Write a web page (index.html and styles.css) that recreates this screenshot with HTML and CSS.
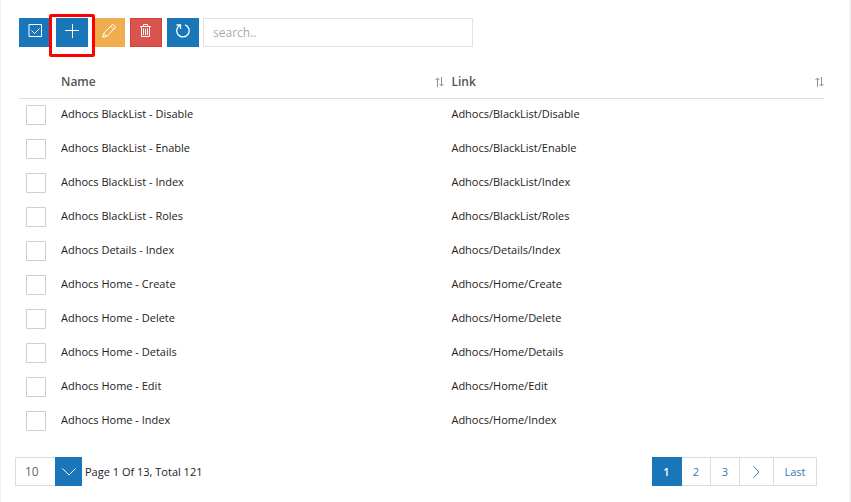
FILE: index.html
```
<!DOCTYPE html>
<html lang="en">
<head>
<meta charset="utf-8">
<title>Permissions</title>
<link rel="stylesheet" href="styles.css">
</head>
<body>
<main class="panel">
  <div class="toolbar">
    <button class="btn" type="button" aria-label="Select all"><svg viewBox="0 0 14 14"><path d="M1 .5h12.500v12H1zM3.500 6.500l3 3 5-5"/></svg></button>
    <div class="marked">
      <button class="btn" type="button" aria-label="Add"><svg viewBox="0 0 14 14"><path d="M7.500 0v14M0 6.500h14"/></svg></button>
      <span class="marker"></span>
    </div>
    <button class="btn btn-edit" type="button" aria-label="Edit"><svg viewBox="0 0 14 14"><path d="M.7 13.300l1-4L10 1q1.200-.9 2.400.4T13 4L4.700 12.300zM1.700 9.300l3 3M8.700 2.300l3 3"/></svg></button>
    <button class="btn btn-delete" type="button" aria-label="Delete"><svg viewBox="0 0 14 14"><path d="M1 2.500h11M4.500 2V.5h4V2M2.500 3v9.500h8V3M4.500 4.500v6.500M6.500 4.500v6.500M8.500 4.500v6.500"/></svg></button>
    <button class="btn" type="button" aria-label="Refresh"><svg class="refresh" viewBox="0 0 14 14"><path d="M9 .900A6.200 6.200 0 1 1 4 1.300M.5 1h4v4"/></svg></button>
    <input class="search" type="text" placeholder="search.." aria-label="Search">
  </div>

  <table class="list">
    <colgroup><col class="col-check"><col class="col-name"><col></colgroup>
    <thead>
      <tr>
        <th></th>
        <th><div class="head">Name<svg class="sort" viewBox="0 0 9 10"><path d="M2.500 10V1M.5 3l2-2 2 2M6.500 0v9M4.500 7l2 2 2-2"/></svg></div></th>
        <th><div class="head">Link<svg class="sort" viewBox="0 0 9 10"><path d="M2.500 10V1M.5 3l2-2 2 2M6.500 0v9M4.500 7l2 2 2-2"/></svg></div></th>
      </tr>
    </thead>
    <tbody>
      <tr><td><input class="check" type="checkbox" aria-label="Adhocs BlackList - Disable"></td><td>Adhocs BlackList - Disable</td><td>Adhocs/BlackList/Disable</td></tr>
      <tr><td><input class="check" type="checkbox" aria-label="Adhocs BlackList - Enable"></td><td>Adhocs BlackList - Enable</td><td>Adhocs/BlackList/Enable</td></tr>
      <tr><td><input class="check" type="checkbox" aria-label="Adhocs BlackList - Index"></td><td>Adhocs BlackList - Index</td><td>Adhocs/BlackList/Index</td></tr>
      <tr><td><input class="check" type="checkbox" aria-label="Adhocs BlackList - Roles"></td><td>Adhocs BlackList - Roles</td><td>Adhocs/BlackList/Roles</td></tr>
      <tr><td><input class="check" type="checkbox" aria-label="Adhocs Details - Index"></td><td>Adhocs Details - Index</td><td>Adhocs/Details/Index</td></tr>
      <tr><td><input class="check" type="checkbox" aria-label="Adhocs Home - Create"></td><td>Adhocs Home - Create</td><td>Adhocs/Home/Create</td></tr>
      <tr><td><input class="check" type="checkbox" aria-label="Adhocs Home - Delete"></td><td>Adhocs Home - Delete</td><td>Adhocs/Home/Delete</td></tr>
      <tr><td><input class="check" type="checkbox" aria-label="Adhocs Home - Details"></td><td>Adhocs Home - Details</td><td>Adhocs/Home/Details</td></tr>
      <tr><td><input class="check" type="checkbox" aria-label="Adhocs Home - Edit"></td><td>Adhocs Home - Edit</td><td>Adhocs/Home/Edit</td></tr>
      <tr><td><input class="check" type="checkbox" aria-label="Adhocs Home - Index"></td><td>Adhocs Home - Index</td><td>Adhocs/Home/Index</td></tr>
    </tbody>
  </table>

  <footer class="footer">
    <div class="size">
      <select class="size-select" aria-label="Rows per page"><option>10</option><option>25</option><option>50</option></select>
      <span class="size-arrow"><svg viewBox="0 0 14 8"><path d="M.5.5L7 7 13.500.5"/></svg></span>
    </div>
    <span class="summary">Page 1 Of 13, Total 121</span>
    <nav class="pages" aria-label="Pages">
      <a class="page current" href="#">1</a>
      <a class="page" href="#">2</a>
      <a class="page" href="#">3</a>
      <a class="page page-next" href="#" aria-label="Next"><svg viewBox="0 0 7 12"><path d="M.5.5L6 6 .5 11.500"/></svg></a>
      <a class="page page-last" href="#">Last</a>
    </nav>
  </footer>
</main>
</body>
</html>
```
FILE: styles.css
```
* {
  box-sizing: border-box;
}

body {
  margin: 0;
  background: #fff;
  color: #222;
  font: 11px/16px "Open Sans", "Noto Sans", sans-serif;
}

.panel {
  min-height: 100vh;
  padding: 18px 25px 15px 18px;
  border: solid #f1f1f1;
  border-width: 0 2px 0 1px;
}

svg {
  display: block;
  fill: none;
  stroke: currentColor;
}

.toolbar {
  display: flex;
  gap: 5px;
}

.btn {
  display: flex;
  align-items: flex-start;
  justify-content: center;
  width: 32px;
  height: 29px;
  padding: 5px 0 0;
  border: 1px solid #1976b8;
  background: #1976b8;
  color: #fff;
}

.btn svg {
  width: 14px;
  height: 14px;
}

.btn-edit {
  border-color: #f0ad4e;
  background: #f0ad4e;
}

.btn-delete {
  border-color: #d43f3a;
  background: #d9534f;
}

.refresh {
  stroke-width: 1.3;
}

.marked {
  position: relative;
}

.marker {
  position: absolute;
  z-index: 1;
  inset: -4px -7px -10px;
  border: 3px solid #f00;
  border-radius: 2px;
  pointer-events: none;
}

.search {
  flex: 0 1 270px;
  min-width: 0;
  height: 29px;
  margin-left: -1px;
  padding: 0 9px;
  border: 1px solid #e2e2e2;
  color: #555;
  font: inherit;
  font-size: 12px;
}

.search::placeholder {
  color: #aaa;
}

.list {
  width: 100%;
  margin-top: 17px;
  border-collapse: collapse;
  table-layout: fixed;
}

.col-check {
  width: 42px;
}

.col-name {
  width: 48.5%;
}

.list th {
  height: 34px;
  padding: 0;
  border-bottom: 1px solid #ddd;
  color: #555;
  font-size: 12px;
  font-weight: 600;
  text-align: left;
}

.list th:nth-child(2) {
  padding-right: 7px;
}

.list td {
  height: 34px;
  padding: 0 0 2px;
}

.list td:first-child {
  padding: 0 0 0 7px;
}

.head {
  display: flex;
  align-items: center;
  justify-content: space-between;
  padding-top: 2px;
}

.sort {
  width: 9px;
  height: 10px;
  color: #7f9a8c;
}

.check {
  display: block;
  width: 20px;
  height: 20px;
  margin: 0;
  appearance: none;
  border: 1px solid #d1d0c9;
  background: #fff;
}

.check:checked {
  background: #1976b8;
}

.footer {
  display: flex;
  align-items: center;
  margin: 19px 7px 0 -4px;
}

.size {
  display: grid;
  width: 67px;
  height: 29px;
}

.size-select,
.size-arrow {
  grid-area: 1 / 1;
}

.size-select {
  appearance: none;
  padding: 0 9px;
  border: 1px solid #ddd;
  border-radius: 0;
  background: #fff;
  color: #666;
  font: inherit;
  font-size: 12px;
}

.size-arrow {
  display: grid;
  place-items: center;
  justify-self: end;
  width: 27px;
  background: #1976b8;
  color: #fff;
  pointer-events: none;
}

.size-arrow svg {
  width: 14px;
  height: 8px;
}

.summary {
  margin-left: 3px;
}

.pages {
  display: flex;
  margin-left: auto;
}

.page {
  display: grid;
  place-items: center;
  width: 29px;
  height: 29px;
  border: solid #ddd;
  border-width: 1px 1px 1px 0;
  color: #337ab7;
  text-decoration: none;
}

.current {
  width: 30px;
  border-color: #1976b8;
  background: #1976b8;
  color: #fff;
  font-weight: 600;
}

.page-next {
  width: 34px;
}

.page-next svg {
  width: 7px;
  height: 12px;
}

.page-last {
  width: 43px;
}
```
